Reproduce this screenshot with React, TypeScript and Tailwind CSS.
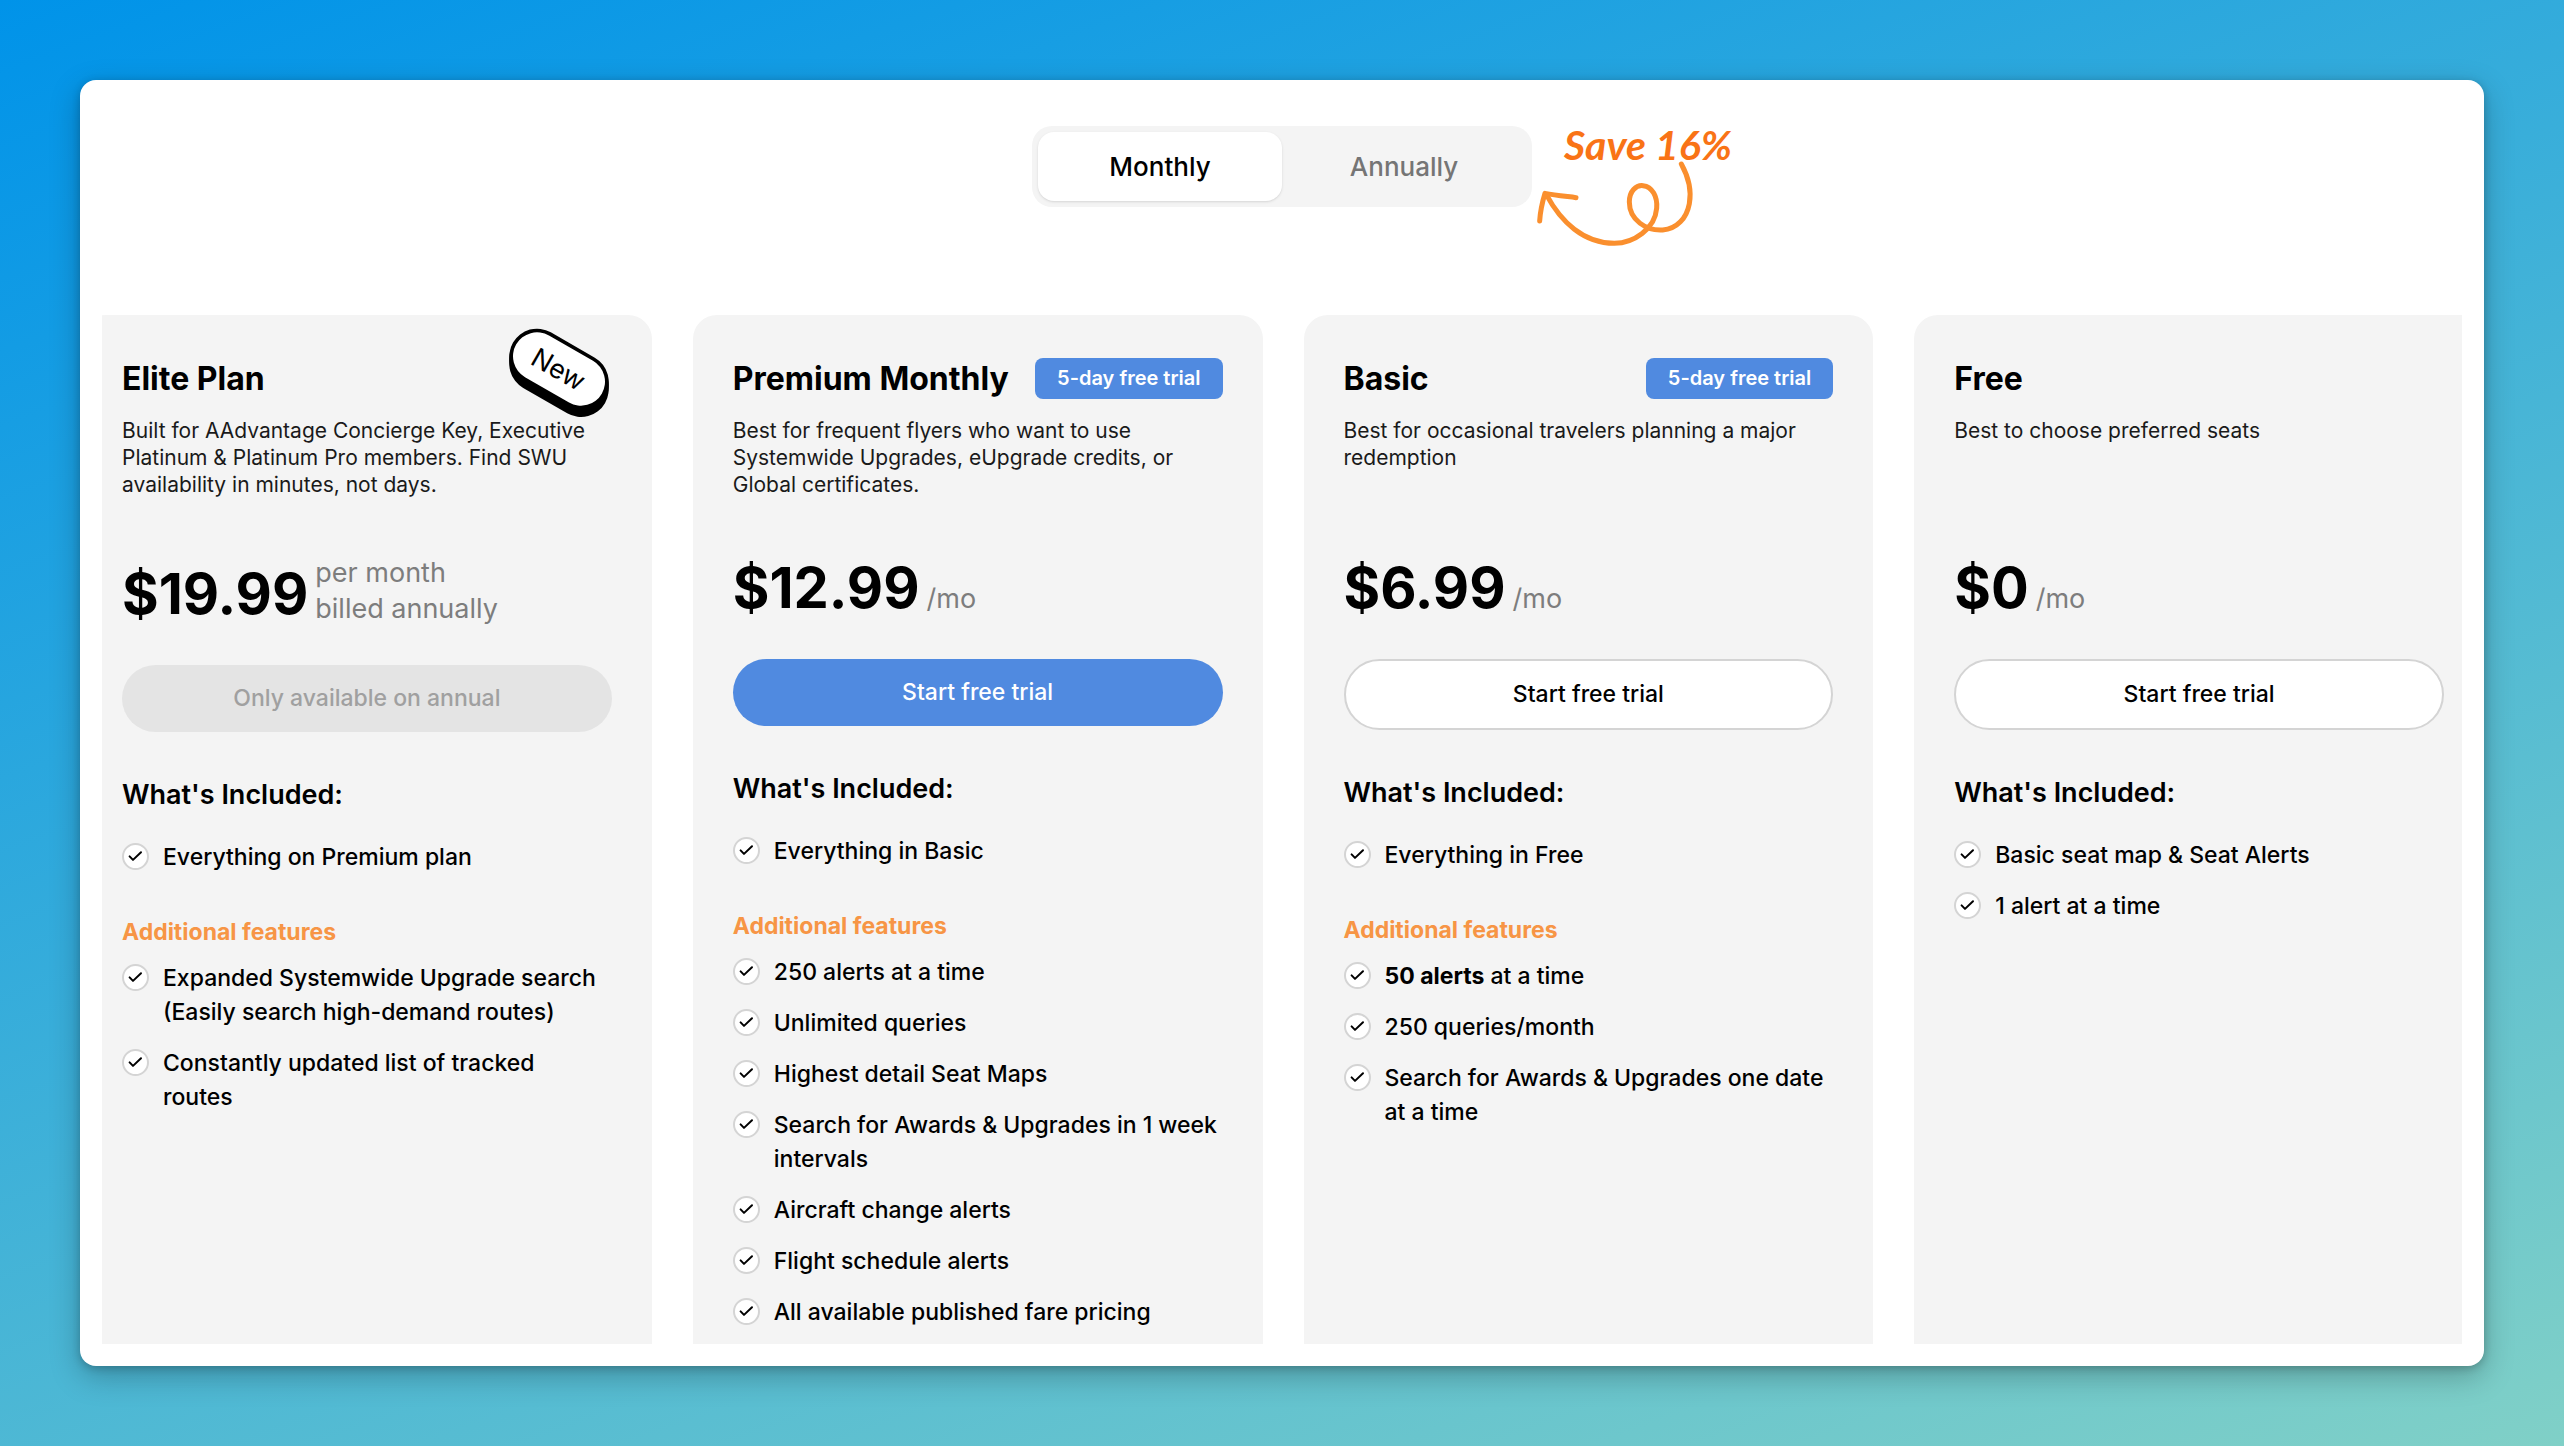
import { ReactNode, useState } from "react";
import clsx from "clsx";

type Billing = "monthly" | "annually";

interface Plan {
  id: string;
  name: string;
  description: string;
  price: string;
  priceNote: string[];
  isNew?: boolean;
  trialLabel?: string;
  buttonLabel: string;
  buttonStyle: "primary" | "outline" | "disabled";
  included: string[];
  additional?: ReactNode[];
}

const plans: Plan[] = [
  {
    id: "elite",
    name: "Elite Plan",
    description:
      "Built for AAdvantage Concierge Key, Executive Platinum & Platinum Pro members. Find SWU availability in minutes, not days.",
    price: "$19.99",
    priceNote: ["per month", "billed annually"],
    isNew: true,
    buttonLabel: "Only available on annual",
    buttonStyle: "disabled",
    included: ["Everything on Premium plan"],
    additional: [
      "Expanded Systemwide Upgrade search (Easily search high-demand routes)",
      "Constantly updated list of tracked routes",
    ],
  },
  {
    id: "premium",
    name: "Premium Monthly",
    description:
      "Best for frequent flyers who want to use Systemwide Upgrades, eUpgrade credits, or Global certificates.",
    price: "$12.99",
    priceNote: ["/mo"],
    trialLabel: "5-day free trial",
    buttonLabel: "Start free trial",
    buttonStyle: "primary",
    included: ["Everything in Basic"],
    additional: [
      "250 alerts at a time",
      "Unlimited queries",
      "Highest detail Seat Maps",
      "Search for Awards & Upgrades in 1 week intervals",
      "Aircraft change alerts",
      "Flight schedule alerts",
      "All available published fare pricing",
    ],
  },
  {
    id: "basic",
    name: "Basic",
    description: "Best for occasional travelers planning a major redemption",
    price: "$6.99",
    priceNote: ["/mo"],
    trialLabel: "5-day free trial",
    buttonLabel: "Start free trial",
    buttonStyle: "outline",
    included: ["Everything in Free"],
    additional: [
      <>
        <strong className="font-bold">50 alerts</strong> at a time
      </>,
      "250 queries/month",
      "Search for Awards & Upgrades one date at a time",
    ],
  },
  {
    id: "free",
    name: "Free",
    description: "Best to choose preferred seats",
    price: "$0",
    priceNote: ["/mo"],
    buttonLabel: "Start free trial",
    buttonStyle: "outline",
    included: ["Basic seat map & Seat Alerts", "1 alert at a time"],
  },
];

function NewSticker() {
  return (
    <svg
      viewBox="80 51 309 276"
      className="absolute top-3 right-[42px] w-[103px]"
      role="img"
      aria-label="New"
    >
      {/* Thick underside, then the outlined face */}
      <g stroke="#000" strokeWidth="166" strokeLinecap="round">
        <path d="M170 139l132 76" />
        <path d="M170 146l132 76" />
        <path d="M170 154l132 76" />
        <path d="M170 162l132 76" />
      </g>
      <path
        d="M170 139l132 76"
        stroke="#fff"
        strokeWidth="144"
        strokeLinecap="round"
      />
      <text
        x="234"
        y="206"
        textAnchor="middle"
        transform="rotate(30 234 178)"
        fontSize="80"
        fill="#000"
      >
        New
      </text>
    </svg>
  );
}

function SaveNote() {
  return (
    <div className="absolute left-full -top-1.5 ml-1 w-[200px] text-[#f97316]">
      <p className="pl-7 font-[Lato,sans-serif] text-[41px] leading-[50px] font-bold italic whitespace-nowrap">
        Save 16%
      </p>
      <svg
        viewBox="45 180 480 270"
        className="-mt-2.5 w-40"
        fill="none"
        stroke="#fa8f2e"
        strokeWidth="15"
        strokeLinecap="round"
        strokeLinejoin="round"
        aria-hidden="true"
      >
        <path d="M481 192C504 234 512 274 505 311C497 354 468 387 425 390C376 393 325 360 325 306C325 273 345 255 366 257C394 260 410 290 407 325C402 387 338 430 280 430C188 430 120 366 76 284" />
        <path d="M56 363C58 332 65 303 72 280C104 286 135 289 165 293" />
      </svg>
    </div>
  );
}

function FeatureItem({ children }: { children: ReactNode }) {
  return (
    <li className="flex items-start gap-3.5 text-[23px] leading-[34px] font-medium">
      <svg
        viewBox="0 0 27 27"
        className="mt-[3px] size-[27px] shrink-0"
        aria-hidden="true"
      >
        <circle cx="13.5" cy="13.5" r="12.5" fill="#fff" stroke="#d4d4d4" strokeWidth="2" />
        <path
          d="M7.6 13.4L11 16.9L19 9.2"
          fill="none"
          stroke="#000"
          strokeWidth="2"
          strokeLinecap="round"
          strokeLinejoin="round"
        />
      </svg>
      <span className="pr-1">{children}</span>
    </li>
  );
}

function PlanCard({ plan }: { plan: Plan }) {
  const hasLongNote = plan.priceNote.length > 1;

  return (
    <article className="relative rounded-t-3xl bg-[#f4f4f4] px-10 pt-[43px] pb-3">
      {plan.isNew && <NewSticker />}

      <div className="flex items-center justify-between">
        <h2 className="text-[32px] leading-[41px] font-bold">{plan.name}</h2>
        {plan.trialLabel && (
          <span className="rounded-lg bg-[#508ae0] px-[22px] text-[20px] leading-[41px] font-semibold text-white">
            {plan.trialLabel}
          </span>
        )}
      </div>
      <p className="mt-[18px] min-h-[81px] text-[21px] leading-[27px] text-[#1a1a1a]">
        {plan.description}
      </p>

      {/* Price */}
      <div
        className={clsx(
          "mt-[57px] flex gap-[7px]",
          hasLongNote ? "items-end" : "items-baseline"
        )}
      >
        <span className="text-[56px] leading-[66px] font-bold">
          {plan.price}
        </span>
        <span className="text-[27px] leading-9 text-[#7d7d7d]">
          {plan.priceNote.map((line) => (
            <span key={line} className="block">
              {line}
            </span>
          ))}
        </span>
      </div>

      <button
        type="button"
        disabled={plan.buttonStyle === "disabled"}
        className={clsx(
          "mt-[38px] w-full rounded-full py-4 text-[23px] leading-[35px] font-medium",
          plan.buttonStyle === "primary" && "bg-[#508ae0] text-white",
          plan.buttonStyle === "outline" &&
            "border-2 border-[#d4d4d4] bg-white text-black",
          plan.buttonStyle === "disabled" && "bg-[#e4e4e4] text-[#a0a0a0]"
        )}
      >
        {plan.buttonLabel}
      </button>

      {/* Features */}
      <h3 className="mt-[46px] text-[27px] leading-[34px] font-semibold">
        What's Included:
      </h3>
      <ul className="mt-7 flex flex-col gap-[17px]">
        {plan.included.map((item) => (
          <FeatureItem key={item}>{item}</FeatureItem>
        ))}
      </ul>
      {plan.additional && (
        <>
          <h4 className="mt-[41px] text-[23px] leading-[34px] font-bold text-[#f79545]">
            Additional features
          </h4>
          <ul className="mt-3 flex flex-col gap-[17px]">
            {plan.additional.map((item, index) => (
              <FeatureItem key={index}>{item}</FeatureItem>
            ))}
          </ul>
        </>
      )}
    </article>
  );
}

function App() {
  const [billing, setBilling] = useState<Billing>("monthly");

  const options: { value: Billing; label: string }[] = [
    { value: "monthly", label: "Monthly" },
    { value: "annually", label: "Annually" },
  ];

  return (
    <div className="flex min-h-screen flex-col bg-[linear-gradient(160deg,#0093e9_0%,#80d0c7_100%)] p-20 font-[Inter,sans-serif] text-black">
      <main className="flex flex-1 flex-col rounded-2xl bg-white px-[22px] pt-[46px] pb-[22px] shadow-[0_10px_30px_rgba(0,0,0,0.25),0_2px_8px_rgba(0,0,0,0.2)]">
        {/* Billing toggle */}
        <div className="relative mx-auto grid w-[500px] grid-cols-2 rounded-[20px] bg-[#f4f4f4] p-1.5">
          {options.map((option) => (
            <button
              key={option.value}
              type="button"
              aria-pressed={billing === option.value}
              onClick={() => setBilling(option.value)}
              className={clsx(
                "rounded-2xl text-[26px] leading-[69px] font-medium",
                billing === option.value
                  ? "bg-white text-black shadow-sm"
                  : "text-[#757575]"
              )}
            >
              {option.label}
            </button>
          ))}
          <SaveNote />
        </div>

        {/* Plans, outer cards run past the edges of the row */}
        <div className="mt-[108px] flex flex-1 overflow-hidden">
          <div className="-mr-[22px] -ml-5 grid flex-1 grid-cols-4 gap-[41px]">
            {plans.map((plan) => (
              <PlanCard key={plan.id} plan={plan} />
            ))}
          </div>
        </div>
      </main>
    </div>
  );
}

export default App;
